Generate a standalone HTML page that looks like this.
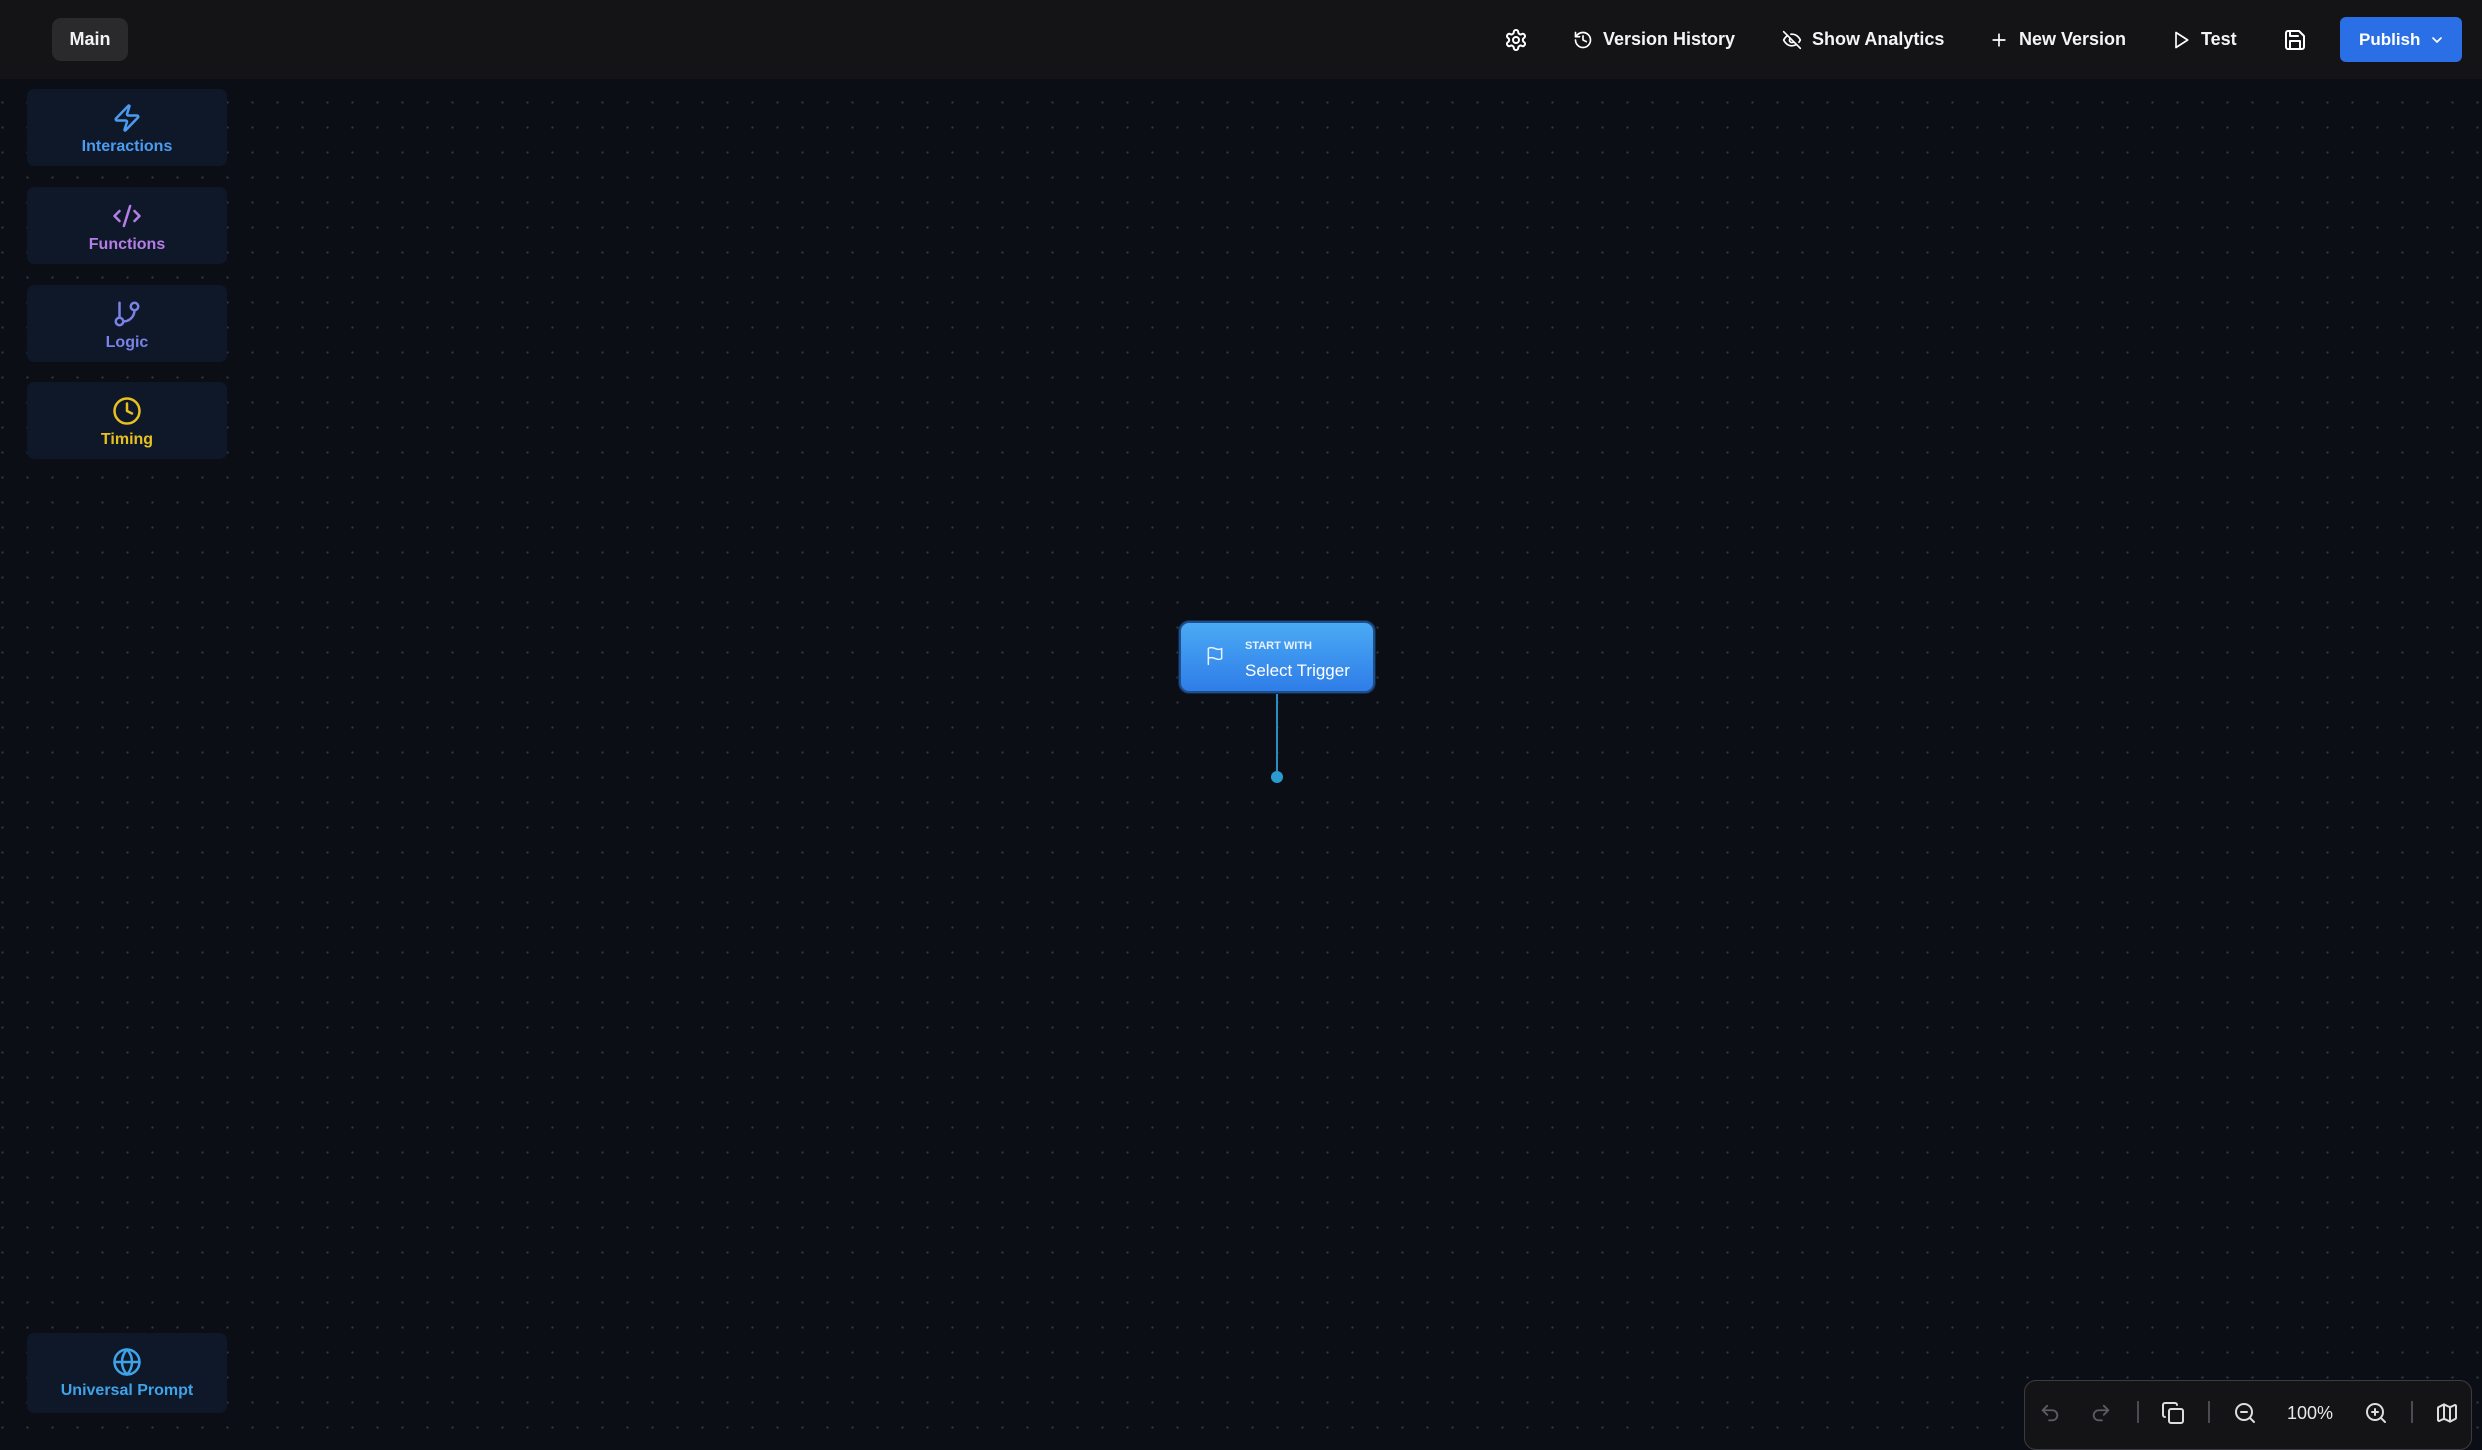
<!DOCTYPE html>
<html><head><meta charset="utf-8">
<style>
*{margin:0;padding:0;box-sizing:border-box}
body{width:2482px;height:1440px;overflow:hidden;background:#0b0e15;font-family:"Liberation Sans",sans-serif;position:relative;
background-image:radial-gradient(circle,#343944 1px,transparent 1.3px);background-size:25px 25px;background-position:-10px -10px}
.hdr{position:absolute;left:0;top:0;width:2482px;height:79px;background:#141416}
.main{position:absolute;left:52px;top:18px;width:76px;height:43px;background:#2a2a2c;border-radius:9px;color:#f2f2f2;font-weight:bold;font-size:18px;line-height:43px;text-align:center}
.it{position:absolute;top:0;height:79px;display:flex;align-items:center;color:#f4f4f4;font-weight:bold;font-size:18px}
.it svg{margin-right:10px}
.pub{position:absolute;left:2340px;top:17px;width:122px;height:45px;background:#2a6fe6;border-radius:6px;color:#fff;font-weight:bold;font-size:17px;display:flex;align-items:center;padding-left:19px}
.card{position:absolute;left:27px;width:200px;height:77px;background:#0e1829;border-radius:7px;text-align:center;font-weight:bold;font-size:16px}
.card svg{display:block;margin:14px auto 5px}
.node{position:absolute;left:1179px;top:621px;width:196px;height:72px;border-radius:10px;background:linear-gradient(#4aaaf4,#2f7de8);border:2px solid #1f4f8a;box-shadow:0 0 0 1px #0d2a4a}
.tb{position:absolute;left:2024px;top:1380px;width:448px;height:70px;background:#141416;border:1.5px solid #3a3c42;border-radius:12px}
.tb svg,.tb span,.tb i{position:absolute}
.tb i{width:1.5px;height:22px;background:#4a4c52;top:20px}
</style></head><body>
<div class="hdr"></div>
<div class="main">Main</div>

<div class="it" style="left:1504px"><svg width="24" height="24" viewBox="0 0 24 24" fill="none" stroke="#fff" stroke-width="2" stroke-linecap="round" stroke-linejoin="round"><path d="M12.22 2h-.44a2 2 0 0 0-2 2v.18a2 2 0 0 1-1 1.730l-.43.25a2 2 0 0 1-2 0l-.15-.08a2 2 0 0 0-2.73.73l-.22.38a2 2 0 0 0 .73 2.73l.15.1a2 2 0 0 1 1 1.72v.51a2 2 0 0 1-1 1.74l-.15.09a2 2 0 0 0-.73 2.73l.22.38a2 2 0 0 0 2.73.73l.15-.08a2 2 0 0 1 2 0l.43.25a2 2 0 0 1 1 1.73V20a2 2 0 0 0 2 2h.44a2 2 0 0 0 2-2v-.18a2 2 0 0 1 1-1.73l.43-.25a2 2 0 0 1 2 0l.15.08a2 2 0 0 0 2.73-.73l.22-.39a2 2 0 0 0-.73-2.73l-.15-.08a2 2 0 0 1-1-1.74v-.5a2 2 0 0 1 1-1.74l.15-.09a2 2 0 0 0 .73-2.73l-.22-.38a2 2 0 0 0-2.73-.73l-.15.08a2 2 0 0 1-2 0l-.43-.25a2 2 0 0 1-1-1.73V4a2 2 0 0 0-2-2z"/><circle cx="12" cy="12" r="3"/></svg></div>

<div class="it" style="left:1573px"><svg width="20" height="20" viewBox="0 0 24 24" fill="none" stroke="#fff" stroke-width="2" stroke-linecap="round" stroke-linejoin="round"><path d="M3 12a9 9 0 1 0 9-9 9.75 9.75 0 0 0-6.74 2.74L3 8"/><path d="M3 3v5h5"/><path d="M12 7v5l4 2"/></svg>Version History</div>

<div class="it" style="left:1782px"><svg width="20" height="20" viewBox="0 0 24 24" fill="none" stroke="#fff" stroke-width="2" stroke-linecap="round" stroke-linejoin="round"><path d="M9.88 9.88a3 3 0 1 0 4.24 4.24"/><path d="M10.73 5.08A10.43 10.43 0 0 1 12 5c7 0 10 7 10 7a13.16 13.16 0 0 1-1.67 2.68"/><path d="M6.61 6.61A13.53 13.53 0 0 0 2 12s3 7 10 7a9.74 9.74 0 0 0 5.39-1.61"/><line x1="2" y1="2" x2="22" y2="22"/></svg>Show Analytics</div>

<div class="it" style="left:1989px"><svg width="20" height="20" viewBox="0 0 24 24" fill="none" stroke="#fff" stroke-width="2" stroke-linecap="round"><path d="M5 12h14M12 5v14"/></svg>New Version</div>

<div class="it" style="left:2171px"><svg width="20" height="20" viewBox="0 0 24 24" fill="none" stroke="#fff" stroke-width="2" stroke-linejoin="round"><polygon points="6 3 20 12 6 21 6 3"/></svg>Test</div>

<div class="it" style="left:2283px"><svg width="24" height="24" viewBox="0 0 24 24" fill="none" stroke="#fff" stroke-width="2" stroke-linecap="round" stroke-linejoin="round"><path d="M19 21H5a2 2 0 0 1-2-2V5a2 2 0 0 1 2-2h11l5 5v11a2 2 0 0 1-2 2z"/><path d="M17 21v-8H7v8"/><path d="M7 3v5h8"/></svg></div>

<div class="pub">Publish<svg style="margin-left:9px" width="16" height="16" viewBox="0 0 24 24" fill="none" stroke="#fff" stroke-width="2.5" stroke-linecap="round" stroke-linejoin="round"><path d="m6 9 6 6 6-6"/></svg></div>

<div class="card" style="top:89px;color:#4b9cf0"><svg width="30" height="30" viewBox="0 0 24 24" fill="none" stroke="#4b9cf0" stroke-width="2" stroke-linejoin="round" stroke-linecap="round"><path d="M4 14a1 1 0 0 1-.78-1.63l9.9-10.2a.5.5 0 0 1 .86.46l-1.920 6.02A1 1 0 0 0 13 10h7a1 1 0 0 1 .78 1.63l-9.9 10.2a.5.5 0 0 1-.86-.46l1.92-6.02A1 1 0 0 0 11 14z"/></svg>Interactions</div>
<div class="card" style="top:187px;color:#b47ee6"><svg width="30" height="30" viewBox="0 0 24 24" fill="none" stroke="#b47ee6" stroke-width="2" stroke-linejoin="round" stroke-linecap="round"><path d="m18 16 4-4-4-4M6 8l-4 4 4 4M14.5 4l-5 16"/></svg>Functions</div>
<div class="card" style="top:285px;color:#7b82e6"><svg width="30" height="30" viewBox="0 0 24 24" fill="none" stroke="#7b82e6" stroke-width="2" stroke-linejoin="round" stroke-linecap="round"><path d="M6 3v12"/><circle cx="18" cy="6" r="3"/><circle cx="6" cy="18" r="3"/><path d="M18 9a9 9 0 0 1-9 9"/></svg>Logic</div>
<div class="card" style="top:382px;color:#e8c020"><svg width="30" height="30" viewBox="0 0 24 24" fill="none" stroke="#e8c020" stroke-width="2" stroke-linejoin="round" stroke-linecap="round"><circle cx="12" cy="12" r="10"/><path d="M12 6v6l4 2"/></svg>Timing</div>
<div class="card" style="top:1333px;height:80px;color:#3ea3e8"><svg width="30" height="30" viewBox="0 0 24 24" fill="none" stroke="#3ea3e8" stroke-width="2" stroke-linejoin="round" stroke-linecap="round"><circle cx="12" cy="12" r="10"/><path d="M12 2a14.5 14.5 0 0 0 0 20 14.5 14.5 0 0 0 0-20M2 12h20"/></svg>Universal Prompt</div>

<div style="position:absolute;left:1276px;top:693px;width:2px;height:83px;background:#2a8fc0"></div>
<div style="position:absolute;left:1271px;top:771px;width:12px;height:12px;border-radius:50%;background:#2a9ad0"></div>
<div class="node">
<svg style="position:absolute;left:24px;top:22px" width="20" height="22" viewBox="0 0 24 24" fill="none" stroke="#e8f2ff" stroke-width="1.8" stroke-linejoin="round" stroke-linecap="round"><path d="M4 15s1-1 4-1 5 2 8 2 4-1 4-1V3s-1 1-4 1-5-2-8-2-4 1-4 1z"/><path d="M4 22v-7"/></svg>
<div style="position:absolute;left:64px;top:17px;color:#e8f2ff;font-size:11px;font-weight:bold">START WITH</div>
<div style="position:absolute;left:64px;top:38px;color:#fff;font-size:17px">Select Trigger</div>
</div>

<div class="tb">
<svg style="left:14px;top:21px" width="22" height="22" viewBox="0 0 24 24" fill="none" stroke="#5a5c62" stroke-width="2" stroke-linecap="round" stroke-linejoin="round"><path d="M9 14 4 9l5-5"/><path d="M4 9h10.5a5.5 5.5 0 0 1 0 11H11"/></svg>
<svg style="left:65px;top:21px" width="22" height="22" viewBox="0 0 24 24" fill="none" stroke="#5a5c62" stroke-width="2" stroke-linecap="round" stroke-linejoin="round"><path d="m15 14 5-5-5-5"/><path d="M20 9H9.5a5.5 5.5 0 0 0 0 11H13"/></svg>
<i style="left:112px"></i>
<svg style="left:136px;top:20px" width="24" height="24" viewBox="0 0 24 24" fill="none" stroke="#ddd" stroke-width="2" stroke-linecap="round" stroke-linejoin="round"><rect x="8" y="8" width="14" height="14" rx="2"/><path d="M4 16c-1.1 0-2-.9-2-2V4c0-1.1.9-2 2-2h10c1.1 0 2 .9 2 2"/></svg>
<i style="left:183px"></i>
<svg style="left:208px;top:20px" width="24" height="24" viewBox="0 0 24 24" fill="none" stroke="#ddd" stroke-width="2" stroke-linecap="round"><circle cx="11" cy="11" r="8"/><path d="m21 21-4.3-4.3M8 11h6"/></svg>
<span style="left:262px;top:22px;color:#e8e8e8;font-size:18px">100%</span>
<svg style="left:339px;top:20px" width="24" height="24" viewBox="0 0 24 24" fill="none" stroke="#ddd" stroke-width="2" stroke-linecap="round"><circle cx="11" cy="11" r="8"/><path d="m21 21-4.3-4.3M11 8v6M8 11h6"/></svg>
<i style="left:386px"></i>
<svg style="left:410px;top:20px" width="24" height="24" viewBox="0 0 24 24" fill="none" stroke="#ddd" stroke-width="2" stroke-linecap="round" stroke-linejoin="round"><path d="M14.1 5.9 9.9 3.8a2 2 0 0 0-1.8 0L3.6 6.1A1 1 0 0 0 3 7v12a1 1 0 0 0 1.4.9l3.7-1.8a2 2 0 0 1 1.8 0l4.2 2.1a2 2 0 0 0 1.8 0l4.5-2.3A1 1 0 0 0 21 17V5a1 1 0 0 0-1.4-.9l-3.7 1.8a2 2 0 0 1-1.8 0zM15 5.8v15M9 3.2v15"/></svg>
</div>
</body></html>
